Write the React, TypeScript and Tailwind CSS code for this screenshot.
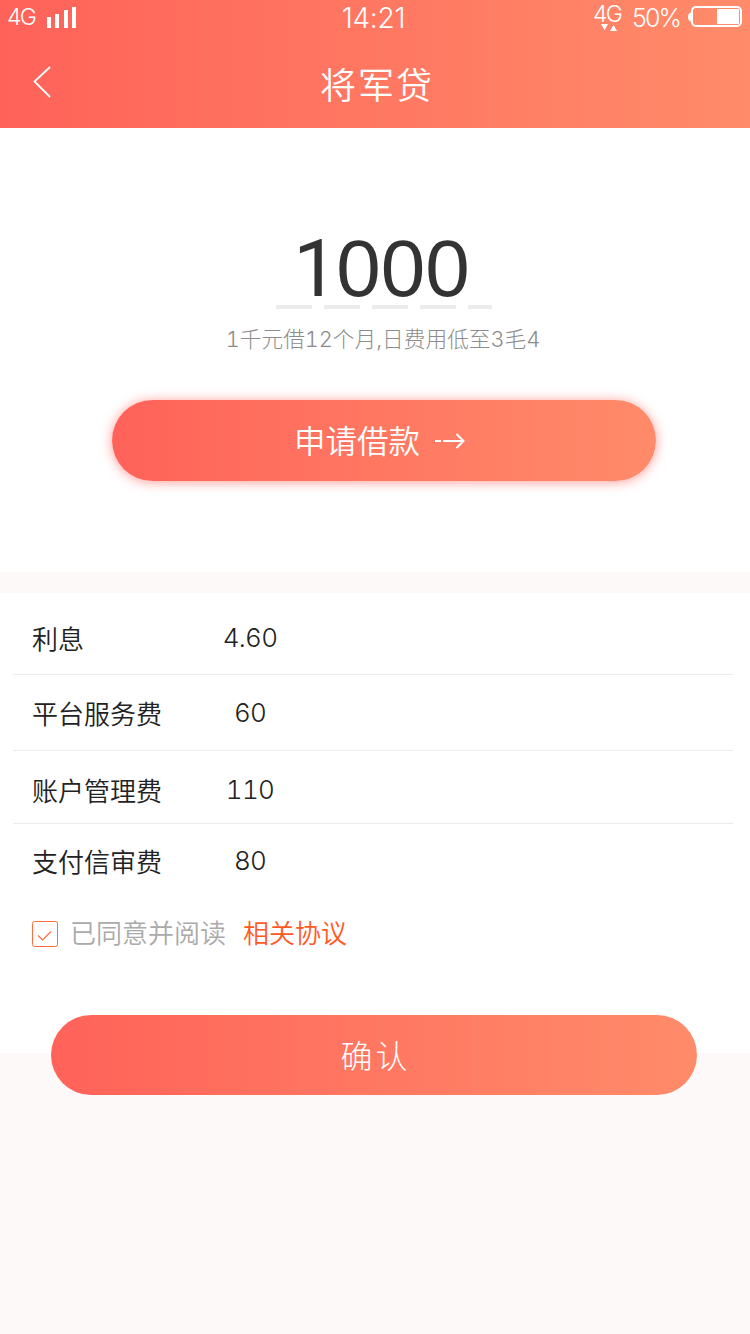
const fees = [
  { label: "利息", value: "4.60", row: "h-[82px] pt-[7px]" },
  { label: "平台服务费", value: "60", row: "h-[76px]" },
  { label: "账户管理费", value: "110", row: "h-[73px] pt-[4px]" },
  { label: "支付信审费", value: "80", row: "h-[76px] pb-[3px]" },
];

function StatusBar() {
  return (
    <div className="flex h-9 items-start justify-between font-['Inter',sans-serif] text-white">
      <div className="flex w-[200px] items-start pl-[7px]">
        <span className="mt-[5px] w-[40px] text-[23px] leading-6 font-light tracking-[-1.6px]">4G</span>
        <svg className="mt-[7px]" width="30" height="21" fill="currentColor">
          <rect x="0" y="10" width="4" height="11" />
          <rect x="8" y="7" width="4" height="14" />
          <rect x="17" y="3" width="4" height="18" />
          <rect x="25" y="0" width="4" height="21" />
        </svg>
      </div>
      <span className="mt-1 mr-[3px] text-[28px] leading-7 font-[350] tracking-[-0.2px]">14:21</span>
      <div className="flex w-[200px] items-start justify-end pr-2">
        <div className="flex w-[38px] flex-col pt-[4px]">
          <span className="-ml-px text-[23px] leading-[21px] font-light tracking-[-1.6px]">4G</span>
          <svg className="-mt-px ml-[7px]" width="17" height="7" fill="currentColor">
            <path d="M0 0h7l-3.500 6zM9 7h7l-3.500-6z" />
          </svg>
        </div>
        <span className="mt-1 w-[56px] text-[25px] leading-7 font-[350] tracking-[-1.9px]">50%</span>
        <svg className="mt-[6px]" width="54" height="21" fill="none">
          <path d="M4 6C1 7 0 8 0 11s1 4 4 5z" fill="currentColor" />
          <rect x="4" y="1" width="49" height="19" rx="4" stroke="currentColor" strokeWidth="2" />
          <rect x="29" y="3" width="22" height="15" fill="currentColor" />
        </svg>
      </div>
    </div>
  );
}

export default function App() {
  return (
    <div className="flex h-[1334px] w-[750px] flex-col bg-[#fdf9f8] font-['Noto_Sans_CJK_SC',sans-serif]">
      <header className="h-32 bg-linear-to-r from-[#ff6259] to-[#ff8b6a]">
        <StatusBar />
        <div className="flex h-[92px] items-center pl-[33px] text-white">
          <svg width="18" height="32" fill="none" stroke="currentColor" strokeWidth="1.800">
            <path d="M17 1L1.500 15.500 17 31" />
          </svg>
          <h1 className="ml-[269px] pt-0.5 text-[36px] leading-10 font-[350] tracking-[2px]">将军贷</h1>
        </div>
      </header>

      <section className="flex h-[444px] flex-col items-center bg-white pl-[18px]">
        <div className="mt-[101px] flex h-[76px] pr-[5px] font-['Liberation_Sans',sans-serif] text-[80px] leading-[80px] text-[#333]">
          <span className="-mr-[2px] font-['Roboto',sans-serif]">1</span>
          <span>000</span>
        </div>
        <div className="flex h-1 w-[216px] gap-3">
          <i className="w-9 bg-[#ebebeb]" />
          <i className="w-9 bg-[#ebebeb]" />
          <i className="w-9 bg-[#ebebeb]" />
          <i className="w-9 bg-[#ebebeb]" />
          <i className="w-6 bg-[#ebebeb]" />
        </div>
        <p className="mt-[14px] h-8 pr-0.5 font-['Inter','Noto_Sans_CJK_SC',sans-serif] text-[21.700px] leading-8 font-light text-[#8c8c8c] tabular-nums">1千元借12个月,日费用低至3毛4</p>
        <button className="mt-[45px] flex h-[81px] w-[544px] items-center rounded-full bg-linear-to-r from-[#ff6259] to-[#ff8b6a] pb-[2px] pl-[182px] text-[31.500px] font-[350] text-white shadow-[0_1px_12px_rgba(255,70,60,0.55)]">
          <span>申请借款</span>
          <svg className="mt-[2px] ml-[15px]" width="32" height="18" fill="none" stroke="currentColor" strokeWidth="2">
            <path d="M0 9h6M8 9h20M21.500 2L28.500 9 21.500 16" />
          </svg>
        </button>
      </section>

      <section className="mt-[21px] h-[460px] bg-white pl-[13px]">
        <div className="w-[720px] divide-y divide-[#ebebeb]">
          {fees.map((fee) => (
            <div key={fee.label} className={`flex items-center pl-[19px] text-[26px] text-[#222] ${fee.row}`}>
              <span className="w-[153px] font-[350]">{fee.label}</span>
              <span className="w-[130px] text-center font-['Inter',sans-serif] font-light tracking-[-0.7px] tabular-nums">{fee.value}</span>
            </div>
          ))}
        </div>
        <div className="flex h-[66px] items-center pl-[19px] text-[26px] font-[350]">
          <svg className="mt-[2px]" width="26" height="26" fill="none" stroke="#ff6e3c">
            <rect x="0.500" y="0.500" width="25" height="25" rx="2" />
            <path d="M6 14.500l4.500 4.500L19 10.500" strokeWidth="1.200" />
          </svg>
          <span className="mb-1 ml-3 text-[#aaa]">已同意并阅读</span>
          <a className="mb-1 ml-[17px] text-[#ff5a1f]">相关协议</a>
        </div>
        <button className="mt-[49px] ml-[38px] flex h-20 w-[646px] items-center justify-center rounded-full bg-linear-to-r from-[#ff6259] to-[#ff8b6a] pb-0.5 pl-[3px] text-[32px] font-light tracking-[3px] text-white">
          确认
        </button>
      </section>
    </div>
  );
}
